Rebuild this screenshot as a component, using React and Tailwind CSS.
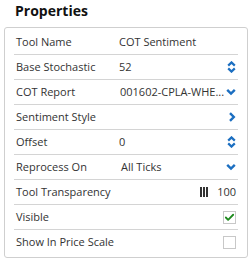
import { Check } from 'lucide-react'

const UpDown = () => (
  <svg width="9" height="12" viewBox="0 0 9 12" className="text-[#1c6fc1]">
    <path d="M1.2 4.6 L4.5 1.4 L7.8 4.6" fill="none" stroke="currentColor" strokeWidth="2.2" />
    <path d="M1.2 7.4 L4.5 10.6 L7.8 7.4" fill="none" stroke="currentColor" strokeWidth="2.2" />
  </svg>
)

const Down = () => (
  <svg width="10" height="8" viewBox="0 0 10 8" className="text-[#1c6fc1]">
    <path d="M1.2 1.8 L5 5.6 L8.8 1.8" fill="none" stroke="currentColor" strokeWidth="2.4" />
  </svg>
)

const Right = () => (
  <svg width="8" height="10" viewBox="0 0 8 10" className="text-[#1c6fc1]">
    <path d="M2 1.2 L5.8 5 L2 8.8" fill="none" stroke="currentColor" strokeWidth="2.4" />
  </svg>
)

const Bars = () => (
  <svg width="8" height="10" viewBox="0 0 8 10" className="text-[#333]">
    <rect x="0" y="0" width="2" height="10" fill="currentColor" />
    <rect x="3" y="0" width="2" height="10" fill="currentColor" />
    <rect x="6" y="0" width="2" height="10" fill="currentColor" />
  </svg>
)

function Row({ label, value, right, last }) {
  return (
    <div className={`flex items-center h-[25px] ${last ? '' : 'border-b border-[#d4d4d4]'}`}>
      <div className="w-[105px] pl-[2px] shrink-0 whitespace-nowrap">{label}</div>
      <div className="flex-1 min-w-0 whitespace-nowrap">{value}</div>
      <div className="flex items-center justify-end shrink-0 pr-[2px]">{right}</div>
    </div>
  )
}

export default function App() {
  return (
    <div className="w-[251px] h-[260px] bg-white text-[#333] text-[11px] font-['Open_Sans',sans-serif]">
      <div className="pl-[15px] pt-[1px] h-[27px] text-[14px] font-bold text-[#111] leading-[20px]">Properties</div>
      <div className="mx-[4px] w-[244px] border border-[#cfcfcf] rounded-[3px] px-[9px] py-[2px]">
        <Row label="Tool Name" value="COT Sentiment" />
        <Row label="Base Stochastic" value="52" right={<UpDown />} />
        <Row
          label="COT Report"
          value={<span className="pl-[1px]">001602-CPLA-WHE...</span>}
          right={<Down />}
        />
        <Row label="Sentiment Style" value="" right={<Right />} />
        <Row label="Offset" value="0" right={<UpDown />} />
        <Row label="Reprocess On" value={<span className="pl-[2px]">All Ticks</span>} right={<Down />} />
        <Row
          label="Tool Transparency"
          value=""
          right={
            <span className="flex items-center gap-[9px]">
              <Bars />
              <span>100</span>
            </span>
          }
        />
        <Row
          label="Visible"
          value=""
          right={
            <span className="w-[13px] h-[13px] border border-[#c8c8c8] flex items-center justify-center">
              <Check size={11} strokeWidth={4} className="text-[#1e8a1e]" />
            </span>
          }
        />
        <Row
          label="Show In Price Scale"
          value=""
          last
          right={<span className="w-[13px] h-[13px] border border-[#c8c8c8] block" />}
        />
      </div>
    </div>
  )
}
